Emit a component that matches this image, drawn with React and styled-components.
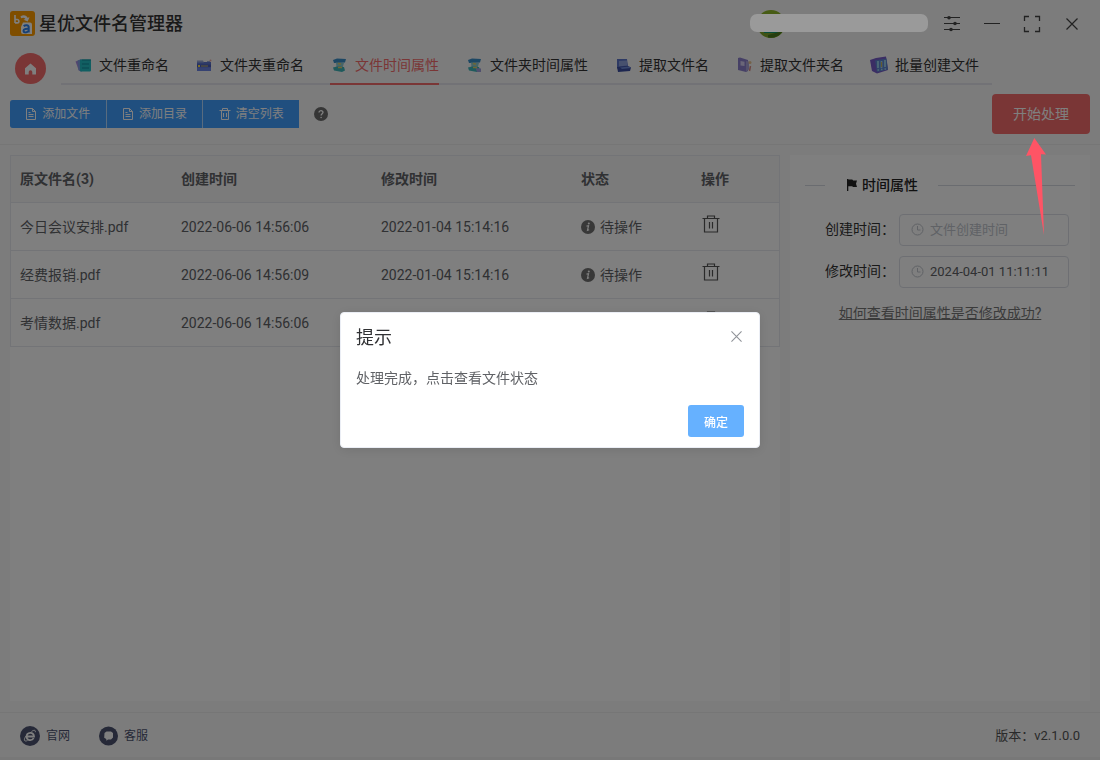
import React from "react";
import styled, { createGlobalStyle } from "styled-components";

const GlobalStyle = createGlobalStyle`
  *, *::before, *::after { box-sizing: border-box; }
  body {
    margin: 0;
    background: #f9f9f9;
    font-family: Roboto, "Noto Sans CJK SC", sans-serif;
    font-size: 14px;
    line-height: 20px;
    color: #303133;
  }
  button, input { font-family: inherit; }
  svg { display: block; flex: none; }
`;

const Page = styled.div`
  min-height: 100vh;
  display: flex;
  flex-direction: column;
`;

const TitleBar = styled.header`
  height: 47px;
  padding: 0 8px 0 10px;
  display: flex;
  align-items: center;
`;

const Brand = styled.h1`
  flex: 1;
  margin: 0 0 0 4px;
  font-size: 18px;
  line-height: 24px;
  font-weight: 500;
  color: #333;
`;

const Account = styled.div`
  position: relative;
  width: 178px;
  height: 28px;
  margin-right: 4px;
  padding-left: 7px;
  display: flex;
  align-items: center;
`;

const AccountMask = styled.span`
  position: absolute;
  inset: 4px 0 6px;
  z-index: 3;
  border-radius: 7px;
  background: #9a9a9a;
`;

const IconButton = styled.button`
  width: ${(p) => p.$size || 40}px;
  height: ${(p) => p.$size || 40}px;
  padding: 0;
  border: 0;
  background: none;
  color: ${(p) => p.$color || "#444"};
  display: flex;
  align-items: center;
  justify-content: center;
  cursor: pointer;
`;

const Nav = styled.nav`
  height: 38px;
  padding-left: 15px;
  display: flex;
  gap: 15px;
`;

const HomeLink = styled.a`
  width: 31px;
  height: 31px;
  margin-top: 6px;
  border-radius: 50%;
  background: #f56c6c;
  display: flex;
  align-items: center;
  justify-content: center;
`;

const Tabs = styled.div`
  display: flex;
  gap: 26px;
  padding: 0 13px;
  box-shadow: inset 0 -2px #e4e4ed;
`;

const Tab = styled.a`
  display: flex;
  align-items: center;
  gap: 7px;
  white-space: nowrap;
  text-decoration: none;
  color: ${(p) => (p.$active ? "#f56c6c" : "#333")};
  border-bottom: 2px solid ${(p) => (p.$active ? "#f56c6c" : "transparent")};
`;

const Toolbar = styled.div`
  height: 60px;
  padding: 0 10px 1px;
  display: flex;
  align-items: center;
  border-bottom: 1px solid #ececec;
`;

const ButtonGroup = styled.div`
  width: 289px;
  display: flex;
  gap: 1px;
  border-radius: 3px 0 0 3px;
  overflow: hidden;
  background: #b3d8ff;
`;

const ToolButton = styled.button`
  flex: 1;
  height: 28px;
  padding: 0;
  border: 0;
  background: #409eff;
  color: #fff;
  font-size: 12px;
  line-height: 16px;
  display: flex;
  align-items: center;
  justify-content: center;
  gap: 5px;
  cursor: pointer;
`;

const HelpButton = styled(IconButton)`
  margin-left: 15px;
`;

const StartArea = styled.div`
  position: relative;
  margin-left: auto;
`;

const StartButton = styled.button`
  display: block;
  width: 98px;
  height: 40px;
  padding: 0 0 2px;
  border: 0;
  border-radius: 4px;
  background: #f56c6c;
  color: #fff;
  font-size: 14px;
  cursor: pointer;
`;

const Pointer = styled.svg`
  position: absolute;
  top: 44px;
  left: 33px;
  z-index: 3;
  pointer-events: none;
`;

const Main = styled.main`
  flex: 1;
  padding: 10px 10px 11px;
  display: flex;
  gap: 10px;
`;

const Panel = styled.section`
  background: #fff;
  ${(p) => (p.$side ? "width: 300px; padding: 20px 15px;" : "flex: 1; min-width: 0;")}
`;

const TableFrame = styled.div`
  border: 1px solid #e6e9ef;
`;

const FileTable = styled.table`
  width: 100%;
  table-layout: fixed;
  border-spacing: 0;
  color: #606266;

  th, td {
    height: 48px;
    padding: 0 10px;
    text-align: left;
    border-bottom: 1px solid #e6e9ef;
  }
  th:first-child, td:first-child {
    padding-left: 9px;
  }
  th {
    height: 47px;
    background: #f6f6f6;
  }
  tr:last-child td {
    height: 47px;
    border-bottom: 0;
  }
`;

const Col = styled.col`
  width: ${(p) => p.$width};
`;

const Status = styled.span`
  display: flex;
  align-items: center;
  gap: 5px;
`;

const RowAction = styled(IconButton)`
  width: 20px;
  height: 24px;
  align-items: flex-start;
`;

const Legend = styled.h2`
  margin: 0;
  font-size: 14px;
  line-height: 20px;
  font-weight: 500;
  color: #222;
  display: flex;
  align-items: center;
  gap: 5px;

  &::before, &::after {
    content: "";
    height: 1px;
    background: #d5d8e0;
  }
  &::before { width: 20px; margin-right: 17px; }
  &::after { flex: 1; margin-left: 15px; }
`;

const Form = styled.form`
  margin-top: 19px;
  padding: 0 6px 0 20px;
  display: flex;
  flex-direction: column;
  gap: 10px;
`;

const Field = styled.div`
  display: flex;
  justify-content: space-between;
`;

const FieldLabel = styled.label`
  line-height: 30px;
  color: #333;
  white-space: nowrap;
`;

const InputBox = styled.div`
  width: 170px;
  height: 32px;
  padding: 0 11px 2px;
  border: 1px solid #dcdfe6;
  border-radius: 4px;
  display: flex;
  align-items: center;
  gap: 6px;
  color: #c0c4cc;
`;

const TextInput = styled.input`
  flex: 1;
  min-width: 0;
  padding: 0;
  border: 0;
  outline: 0;
  background: none;
  font-size: 13px;
  color: #606266;
  &::placeholder { color: #c0c4cc; opacity: 1; }
`;

const HelpText = styled.p`
  margin: 15px 0 0;
  text-align: center;
`;

const HelpLink = styled.a`
  color: #777;
`;

const Footer = styled.footer`
  height: 48px;
  padding: 2px 20px 0;
  border-top: 1px solid #ececec;
  border-bottom: 3px solid #f0f0f0;
  display: flex;
  align-items: center;
  gap: 29px;
`;

const FooterLink = styled.a`
  display: flex;
  align-items: center;
  gap: 6px;
  font-size: 12px;
  text-decoration: none;
  color: #4c5370;
`;

const Version = styled.span`
  margin-left: auto;
  font-size: 13px;
  color: #555;
`;

const Overlay = styled.div`
  position: fixed;
  inset: 0;
  z-index: 2;
  display: flex;
  align-items: center;
  justify-content: center;
  background: rgba(0, 0, 0, 0.5);
`;

const Dialog = styled.div`
  width: 420px;
  padding: 11px 15px 10px;
  border: 1px solid #ebeef5;
  border-radius: 4px;
  background: #fff;
  box-shadow: 0 2px 12px rgba(0, 0, 0, 0.1);
`;

const DialogHead = styled.div`
  display: flex;
  justify-content: space-between;
`;

const DialogTitle = styled.h2`
  margin: 0;
  font-size: 18px;
  line-height: 28px;
  font-weight: 400;
`;

const DialogText = styled.p`
  margin: 16px 0 17px;
  line-height: 20px;
  color: #606266;
`;

const DialogActions = styled.div`
  display: flex;
  justify-content: flex-end;
`;

const ConfirmButton = styled.button`
  width: 56px;
  height: 32px;
  padding: 0;
  border: 0;
  border-radius: 3px;
  background: #66b1ff;
  color: #fff;
  font-size: 12px;
  font-weight: 500;
  cursor: pointer;
`;

const DialogClose = styled(IconButton)`
  height: 24px;
`;

const Logo = () => (
  <svg width="25" height="25" viewBox="0 0 25 25" aria-hidden="true">
    <rect width="25" height="25" rx="3" fill="#ff9c00" />
    <path d="M5 4v8M5 8.500h2.200a1.700 1.700 0 0 1 0 3.400H5" fill="none" stroke="#fff" strokeWidth="1.600" />
    <path d="M10.500 5.200c3.500-2 6.300-.7 7 1.600l2-.6-1.800 4.300-4.200-1.700 1.900-.9c-1-1.300-2.600-1.400-4.300-.6z" fill="#fff" />
    <path d="M13 11.500h7q2 0 2 2V23h-9q-2 0-2-2v-5z" fill="#fff" />
    <path d="M13.700 15.200c1.500-1.400 5-1.400 5 1v5.300M18.700 17.800c-2-.2-5.200 0-5.200 2s3.700 2.200 5.200 0" fill="none" stroke="#2f82ec" strokeWidth="2" />
  </svg>
);

const Avatar = () => (
  <svg width="28" height="28" viewBox="0 0 28 28" aria-hidden="true">
    <circle cx="14" cy="14" r="14" fill="#8fb82a" />
    <path d="M2 21h24a14 14 0 0 1-24 0" fill="#7ea52a" />
    <path d="M7 21h14v2H7z" fill="#159a72" />
    <path d="M11 25l11-3h3a14 14 0 0 1-14 5.500z" fill="#4d7d1e" />
  </svg>
);

const SlidersIcon = () => (
  <svg width="16" height="16" viewBox="0 0 16 16" stroke="currentColor" aria-hidden="true">
    <path d="M0 1.500h16M0 7.500h16M0 13.500h16" />
    <g fill="currentColor" stroke="none">
      <circle cx="5" cy="1.800" r="1.800" /><circle cx="11" cy="7.500" r="1.800" /><circle cx="7" cy="13.500" r="1.800" />
    </g>
  </svg>
);

const MinusIcon = () => (
  <svg width="16" height="16" viewBox="0 0 16 16" stroke="currentColor" aria-hidden="true">
    <path d="M0 7.500h16" />
  </svg>
);

const ExpandIcon = () => (
  <svg width="18" height="18" viewBox="0 0 18 18" fill="none" stroke="currentColor" strokeWidth="1.300" aria-hidden="true">
    <path d="M1.500 6V1.500H6M12 1.500h4.500V6M16.500 12v4.500H12M6 16.500H1.500V12" />
  </svg>
);

const CloseIcon = ({ size = 12 }) => (
  <svg width={size} height={size} viewBox="0 0 12 12" stroke="currentColor" strokeWidth="1.200" aria-hidden="true">
    <path d="M.5.500l11 11M11.500.500l-11 11" />
  </svg>
);

const HomeIcon = () => (
  <svg width="13" height="12" viewBox="0 0 13 12" aria-hidden="true">
    <path d="M6.500.500 12 5.200V11q0 .6-.6.600H8.300V9a1.800 1.800 0 0 0-3.600 0v2.600H1.600Q1 11.600 1 11V5.200z" fill="#fff" />
  </svg>
);

const DocIcon = () => (
  <svg width="12" height="12" viewBox="0 0 12 12" fill="none" stroke="currentColor" aria-hidden="true">
    <path d="M1.500.500h6l3 3v8h-9zM7.500.500v3h3M3.500 4.500h2M3.500 6.500h5M3.500 8.500h5" />
  </svg>
);

const BinIcon = () => (
  <svg width="12" height="12" viewBox="0 0 12 12" fill="none" stroke="currentColor" aria-hidden="true">
    <path d="M.5 2.500h11M3.500 2.500v-2h5v2M2.500 2.500v9h7v-9M4.500 5v4M7.500 5v4" />
  </svg>
);

const TrashIcon = () => (
  <svg width="18" height="18" viewBox="0 0 18 18" fill="none" stroke="currentColor" strokeWidth="1.200" aria-hidden="true">
    <path d="M.5 3.500h17M5.500 3.500v-2.500h7v2.500M2.500 3.500v13.500h13V3.500M7.500 7v6.500M10.500 7v6.500" />
  </svg>
);

const QuestionIcon = () => (
  <svg width="14" height="14" viewBox="0 0 14 14" aria-hidden="true">
    <circle cx="7" cy="7" r="7" fill="#6c6c6c" />
    <path d="M5 5.600C5 3 9.200 3.200 9 5.400 8.900 6.700 7.100 6.700 7.100 8.500" fill="none" stroke="#fff" strokeWidth="1.300" />
    <circle cx="7.100" cy="10.500" r=".8" fill="#fff" />
  </svg>
);

const InfoIcon = () => (
  <svg width="14" height="14" viewBox="0 0 14 14" aria-hidden="true">
    <circle cx="7" cy="7" r="7" fill="#707070" />
    <circle cx="7.800" cy="3.600" r="1" fill="#fff" />
    <path d="M5.500 6.100 7.500 5.700 6.500 10.300 8.200 9.700" fill="none" stroke="#fff" strokeWidth="1.200" />
  </svg>
);

const FlagIcon = () => (
  <svg width="10" height="12" viewBox="0 0 10 12" aria-hidden="true">
    <path d="M0 0h1.300v12H0zM1.300.600h4l.8.8H10L9 4.700l1 3.300H6l-.8-.8H1.300z" fill="#222" />
  </svg>
);

const ClockIcon = () => (
  <svg width="13" height="13" viewBox="0 0 13 13" fill="none" stroke="currentColor" aria-hidden="true">
    <circle cx="6.500" cy="6.500" r="5.500" />
    <path d="M6.500 3v4H9.500" />
  </svg>
);

const BrowserIcon = () => (
  <svg width="20" height="20" viewBox="0 0 20 20" aria-hidden="true">
    <circle cx="10" cy="10" r="10" fill="#4c5370" />
    <path d="M6.500 10.500h7.500c0-5-7.300-4.500-7.500.3.200 4 5.500 4.200 7.200 1.300" fill="none" stroke="#fff" strokeWidth="1.800" />
    <path d="M11.500 5.500c2.500-1.800 4.300-1.600 3.800.7M6 10c-2.500 3.500-2.200 6 1.500 4.600" fill="none" stroke="#fff" />
  </svg>
);

const ChatIcon = () => (
  <svg width="19" height="20" viewBox="0 0 19 20" aria-hidden="true">
    <circle cx="9.500" cy="10" r="9.500" fill="#4c5370" />
    <path d="M7.500 5.500h4.500l2 1.500v4.500l-2 2H9l-1.500 1.300-.3-1.800-2-1.200.3-4.800z" fill="#fff" />
  </svg>
);

const tabDrawings = {
  cards: (
    <>
      <path d="M1.500 5.500l6-2v10l-2.500 1.500z" fill="#a98be0" />
      <path d="M3.500 4.500l4-1.500v13l-3-2z" fill="#7f9fe0" />
      <rect x="6" y="3.500" width="11" height="12" rx="1" fill="#22bfc4" />
      <path d="M8 4h9M8 8h7M8 12h7" stroke="#128c9c" strokeWidth="1.200" />
    </>
  ),
  folder: (
    <>
      <path d="M2 5h5l1 1h8v9H2z" fill="#5c74d0" />
      <path d="M2 4.500h6l1 2H2zM12 5h3v1h-3z" fill="#9aa8d8" />
      <path d="M2 8.500h14v2.500H2z" fill="#4a5cb8" />
      <path d="M3 9h2v2H3z" fill="#ffe04a" />
      <path d="M6 10h7" stroke="#c9b86a" />
      <path d="M2 11.500h14V15H2z" fill="#6c84e4" />
      <circle cx="15.500" cy="4.500" r="1" fill="#e8a4a0" />
    </>
  ),
  timeFile: (
    <>
      <path d="M3 4l4-1.500 9 .5-1 3.500-11 .5z" fill="#3a8fc8" />
      <path d="M6 6.500l8 .5-1.500 5-6-.5z" fill="#8ecad0" />
      <path d="M3 11.500l4-1 7 .5 1 3.500-3 1.500-8-1.500z" fill="#3fb4b8" />
      <path d="M8 7.500l3 .5M8 11.500h4" stroke="#e0cf6a" strokeWidth="1.300" />
    </>
  ),
  timeFolder: (
    <>
      <path d="M3 4l4-1.500 9 .5-1 3.500-11 .5z" fill="#3a8fc8" />
      <path d="M6 6.500l8 .5-1.500 5-6-.5z" fill="#8ecad0" />
      <path d="M3 11.500l4-1 7 .5 1 3.500-3 1.500-8-1.500z" fill="#3fb4b8" />
      <path d="M10.500 12l5.500.500v3.500h-4z" fill="#a09fdc" />
      <path d="M8 7.500l3 .5M8 11.500h4" stroke="#e0cf6a" strokeWidth="1.300" />
    </>
  ),
  extract: (
    <>
      <path d="M3 3h10l1 7.500-11 2z" fill="#5c74c8" />
      <path d="M5 5l8-.5v5l-8 1z" fill="#8fa2dc" />
      <path d="M3 11l11-1 3 1.500-1 3.500-12 1z" fill="#3a4ca0" />
      <path d="M6 11.500l9-1 2 1.500-9 1z" fill="#6f8cd8" />
    </>
  ),
  extractFolder: (
    <>
      <path d="M3 2l2-.5 8 2.500v11l-2 1-8-2z" fill="#8d80cc" />
      <path d="M5.500 5l4 .7v4.300l-4-.6z" fill="#d4cdf0" />
      <path d="M11 5l3 .5v8l-3 2z" fill="#aaa4d8" />
      <path d="M15.500 10l-1 5" stroke="#d88a84" strokeWidth="1.500" />
      <circle cx="15" cy="6.500" r="1.500" fill="#e8c490" />
    </>
  ),
  batch: (
    <>
      <path d="M0 4l6-2 10-1.500L18 14 7 17.500 2 15z" fill="#765cc8" />
      <path d="M5 4.500l11.500-2L18 13.500 7 16z" fill="#5f86d0" />
      <path d="M8 5v7M11.500 5v7M15 4v7" stroke="#9cd4ea" strokeWidth="1.800" />
      <path d="M11.500 6v5" stroke="#c8b45a" />
      <path d="M7.500 14h1.500M11 13.500h1.500M14.500 13h1.500" stroke="#9cd4ea" strokeWidth="1.500" />
    </>
  ),
};

const TabIcon = ({ name }) => (
  <svg width="18" height="18" viewBox="0 0 18 18" aria-hidden="true">{tabDrawings[name]}</svg>
);

const tabs = [
  { label: "文件重命名", icon: "cards" },
  { label: "文件夹重命名", icon: "folder" },
  { label: "文件时间属性", icon: "timeFile", active: true },
  { label: "文件夹时间属性", icon: "timeFolder" },
  { label: "提取文件名", icon: "extract" },
  { label: "提取文件夹名", icon: "extractFolder" },
  { label: "批量创建文件", icon: "batch" },
];

const files = [
  { name: "今日会议安排.pdf", created: "2022-06-06 14:56:06", modified: "2022-01-04 15:14:16" },
  { name: "经费报销.pdf", created: "2022-06-06 14:56:09", modified: "2022-01-04 15:14:16" },
  { name: "考情数据.pdf", created: "2022-06-06 14:56:06", modified: "2022-01-04 15:14:16" },
];

export default function App() {
  return (
    <>
      <GlobalStyle />
      <Page>
        <TitleBar>
          <Logo />
          <Brand>星优文件名管理器</Brand>
          <Account>
            <Avatar />
            <AccountMask />
          </Account>
          <IconButton aria-label="设置"><SlidersIcon /></IconButton>
          <IconButton aria-label="最小化"><MinusIcon /></IconButton>
          <IconButton aria-label="最大化"><ExpandIcon /></IconButton>
          <IconButton aria-label="关闭"><CloseIcon /></IconButton>
        </TitleBar>
        <Nav>
          <HomeLink href="#home" aria-label="首页"><HomeIcon /></HomeLink>
          <Tabs>
            {tabs.map((t) => (
              <Tab key={t.label} href={`#${t.icon}`} $active={t.active} aria-current={t.active ? "page" : undefined}>
                <TabIcon name={t.icon} />
                {t.label}
              </Tab>
            ))}
          </Tabs>
        </Nav>
        <Toolbar>
          <ButtonGroup>
            <ToolButton><DocIcon />添加文件</ToolButton>
            <ToolButton><DocIcon />添加目录</ToolButton>
            <ToolButton><BinIcon />清空列表</ToolButton>
          </ButtonGroup>
          <HelpButton $size={14} aria-label="帮助"><QuestionIcon /></HelpButton>
          <StartArea>
            <StartButton>开始处理</StartButton>
            <Pointer width="22" height="102" viewBox="0 0 22 102" aria-hidden="true">
              <path d="M9.300 0 21 16.500 16 16.300 19 97 6 17.300 1 18z" fill="#ff5465" />
            </Pointer>
          </StartArea>
        </Toolbar>
        <Main>
          <Panel>
            <TableFrame>
              <FileTable>
                <colgroup>
                  <Col $width="160px" />
                  <Col $width="200px" />
                  <Col $width="200px" />
                  <Col $width="120px" />
                  <Col $width="auto" />
                </colgroup>
                <thead>
                  <tr>
                    <th scope="col">原文件名(3)</th>
                    <th scope="col">创建时间</th>
                    <th scope="col">修改时间</th>
                    <th scope="col">状态</th>
                    <th scope="col">操作</th>
                  </tr>
                </thead>
                <tbody>
                  {files.map((f) => (
                    <tr key={f.name}>
                      <td>{f.name}</td>
                      <td>{f.created}</td>
                      <td>{f.modified}</td>
                      <td><Status><InfoIcon />待操作</Status></td>
                      <td><RowAction $color="#555" aria-label="删除"><TrashIcon /></RowAction></td>
                    </tr>
                  ))}
                </tbody>
              </FileTable>
            </TableFrame>
          </Panel>
          <Panel $side>
            <Legend><FlagIcon />时间属性</Legend>
            <Form>
              <Field>
                <FieldLabel htmlFor="created">创建时间：</FieldLabel>
                <InputBox><ClockIcon /><TextInput id="created" placeholder="文件创建时间" /></InputBox>
              </Field>
              <Field>
                <FieldLabel htmlFor="modified">修改时间：</FieldLabel>
                <InputBox><ClockIcon /><TextInput id="modified" defaultValue="2024-04-01 11:11:11" /></InputBox>
              </Field>
            </Form>
            <HelpText><HelpLink href="#guide">如何查看时间属性是否修改成功?</HelpLink></HelpText>
          </Panel>
        </Main>
        <Footer>
          <FooterLink href="#site"><BrowserIcon />官网</FooterLink>
          <FooterLink href="#service"><ChatIcon />客服</FooterLink>
          <Version>版本：v2.1.0.0</Version>
        </Footer>
      </Page>
      <Overlay>
        <Dialog role="dialog" aria-modal="true" aria-labelledby="dialog-title">
          <DialogHead>
            <DialogTitle id="dialog-title">提示</DialogTitle>
            <DialogClose $size={16} $color="#909399" aria-label="关闭"><CloseIcon size={11} /></DialogClose>
          </DialogHead>
          <DialogText>处理完成，点击查看文件状态</DialogText>
          <DialogActions><ConfirmButton>确定</ConfirmButton></DialogActions>
        </Dialog>
      </Overlay>
    </>
  );
}
